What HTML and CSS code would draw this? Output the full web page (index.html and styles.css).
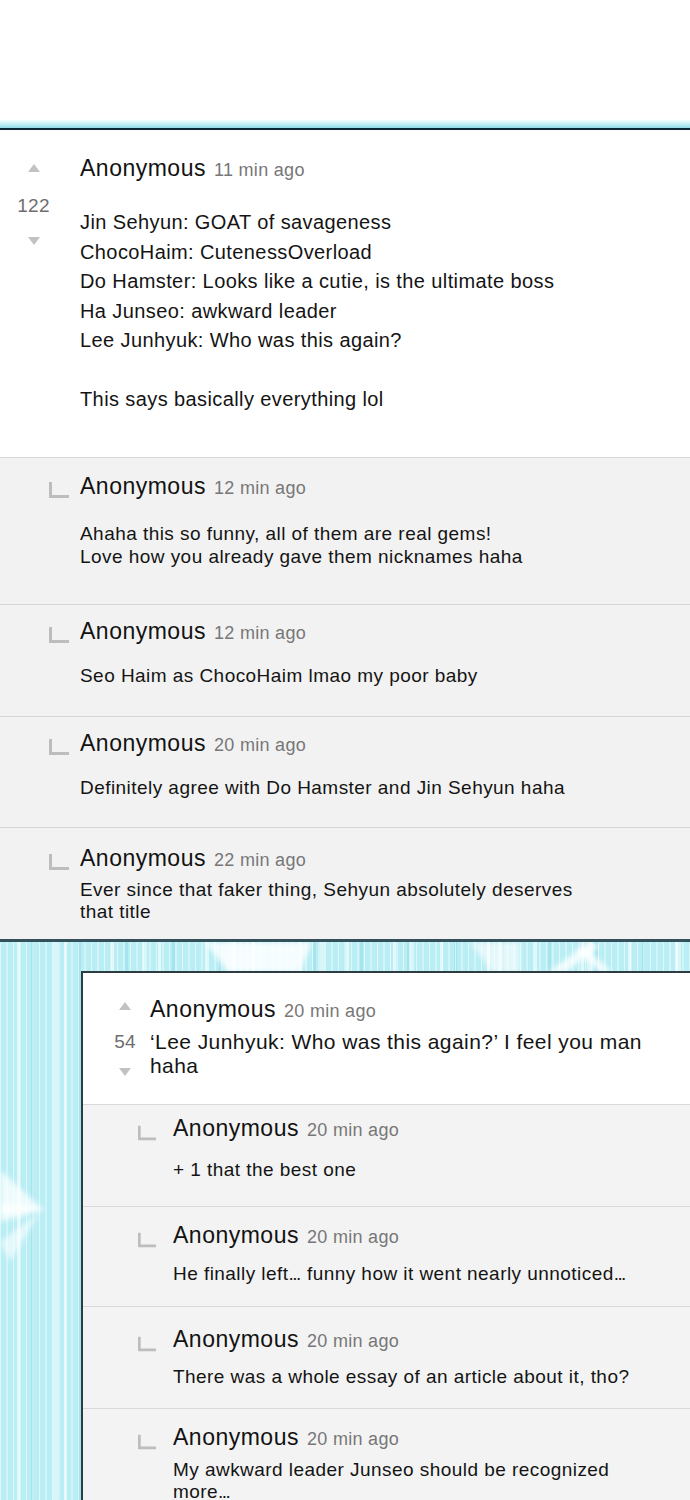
FILE: index.html
```html
<!DOCTYPE html>
<html lang="en">
<head>
<meta charset="utf-8">
<title>Comments</title>
<link rel="stylesheet" href="styles.css">
</head>
<body>
<div class="page">
  <div class="topspace"></div>
  <div class="glow"></div>
  <div class="rule"></div>

  <section class="thread">
    <article class="comment">
      <div class="vote">
        <span class="arrow up"></span>
        <span class="count">122</span>
        <span class="arrow down"></span>
      </div>
      <div class="content">
        <div class="meta"><span class="name">Anonymous</span><span class="time">11 min ago</span></div>
        <p class="body">Jin Sehyun: GOAT of savageness<br>ChocoHaim: CutenessOverload<br>Do Hamster: Looks like a cutie, is the ultimate boss<br>Ha Junseo: awkward leader<br>Lee Junhyuk: Who was this again?<br><br>This says basically everything lol</p>
      </div>
    </article>

    <article class="reply r1">
      <svg class="hook" viewBox="0 0 20 16" aria-hidden="true"><path d="M1.5 0 V14.5 H20"/></svg>
      <div class="content">
        <div class="meta"><span class="name">Anonymous</span><span class="time">12 min ago</span></div>
        <p class="body">Ahaha this so funny, all of them are real gems!<br>Love how you already gave them nicknames haha</p>
      </div>
    </article>

    <article class="reply r2">
      <svg class="hook" viewBox="0 0 20 16" aria-hidden="true"><path d="M1.5 0 V14.5 H20"/></svg>
      <div class="content">
        <div class="meta"><span class="name">Anonymous</span><span class="time">12 min ago</span></div>
        <p class="body">Seo Haim as ChocoHaim lmao my poor baby</p>
      </div>
    </article>

    <article class="reply r3">
      <svg class="hook" viewBox="0 0 20 16" aria-hidden="true"><path d="M1.5 0 V14.5 H20"/></svg>
      <div class="content">
        <div class="meta"><span class="name">Anonymous</span><span class="time">20 min ago</span></div>
        <p class="body">Definitely agree with Do Hamster and Jin Sehyun haha</p>
      </div>
    </article>

    <article class="reply r4">
      <svg class="hook" viewBox="0 0 20 16" aria-hidden="true"><path d="M1.5 0 V14.5 H20"/></svg>
      <div class="content">
        <div class="meta"><span class="name">Anonymous</span><span class="time">22 min ago</span></div>
        <p class="body">Ever since that faker thing, Sehyun absolutely deserves<br>that title</p>
      </div>
    </article>
  </section>

  <div class="rule rule-dark"></div>

  <section class="backdrop">
    <svg class="burst" viewBox="0 0 690 560" preserveAspectRatio="none" aria-hidden="true">
      <defs><filter id="soft"><feGaussianBlur stdDeviation="2.5"/></filter></defs>
      <g fill="#ffffff" filter="url(#soft)">
        <polygon points="205,0 312,0 300,30 228,30" opacity="0.85"/>
        <polygon points="470,0 520,0 520,30 492,30" opacity="0.6"/>
        <polygon points="548,30 590,0 600,4 566,30" opacity="0.8"/>
        <polygon points="600,30 575,8 584,4 612,30" opacity="0.8"/>
        <polygon points="0,228 44,268 0,280" opacity="0.75"/>
        <polygon points="0,262 46,266 0,272" opacity="0.9"/>
        <polygon points="0,300 40,270 10,320" opacity="0.6"/>
      </g>
    </svg>

    <div class="card">
      <article class="comment card-main">
        <div class="vote">
          <span class="arrow up"></span>
          <span class="count">54</span>
          <span class="arrow down"></span>
        </div>
        <div class="content">
          <div class="meta"><span class="name">Anonymous</span><span class="time">20 min ago</span></div>
          <p class="body">‘Lee Junhyuk: Who was this again?’ I feel you man<br>haha</p>
        </div>
      </article>

      <article class="reply card-reply c1">
        <svg class="hook" viewBox="0 0 20 16" aria-hidden="true"><path d="M1.5 0 V14.5 H20"/></svg>
        <div class="content">
          <div class="meta"><span class="name">Anonymous</span><span class="time">20 min ago</span></div>
          <p class="body">+ 1 that the best one</p>
        </div>
      </article>

      <article class="reply card-reply c2">
        <svg class="hook" viewBox="0 0 20 16" aria-hidden="true"><path d="M1.5 0 V14.5 H20"/></svg>
        <div class="content">
          <div class="meta"><span class="name">Anonymous</span><span class="time">20 min ago</span></div>
          <p class="body">He finally left<span class="dots">...</span> funny how it went nearly unnoticed<span class="dots">...</span></p>
        </div>
      </article>

      <article class="reply card-reply c3">
        <svg class="hook" viewBox="0 0 20 16" aria-hidden="true"><path d="M1.5 0 V14.5 H20"/></svg>
        <div class="content">
          <div class="meta"><span class="name">Anonymous</span><span class="time">20 min ago</span></div>
          <p class="body">There was a whole essay of an article about it, tho?</p>
        </div>
      </article>

      <article class="reply card-reply c4">
        <svg class="hook" viewBox="0 0 20 16" aria-hidden="true"><path d="M1.5 0 V14.5 H20"/></svg>
        <div class="content">
          <div class="meta"><span class="name">Anonymous</span><span class="time">20 min ago</span></div>
          <p class="body">My awkward leader Junseo should be recognized<br>more<span class="dots">...</span></p>
        </div>
      </article>
    </div>
  </section>
</div>
</body>
</html>
```

FILE: styles.css
```css
* { box-sizing: border-box; }

html, body {
  margin: 0;
  padding: 0;
  background: #ffffff;
}

body {
  font-family: "Liberation Sans", Arial, Helvetica, sans-serif;
  color: #141414;
}

.page {
  width: 690px;
  height: 1500px;
  overflow: hidden;
  display: flex;
  flex-direction: column;
}

.topspace { height: 119px; background: #ffffff; flex: none; }

.glow {
  height: 9px;
  flex: none;
  background: linear-gradient(to bottom, #ffffff 0%, #d4f6fa 40%, #a9e6ef 80%, #8fdbe8 100%);
}

.rule { height: 2px; flex: none; background: #0c2734; }

.rule-dark { height: 3px; background: #34505a; }

.thread { flex: none; }

/* ---------- shared text ---------- */
.meta {
  display: flex;
  align-items: baseline;
  gap: 8px;
  height: 28px;
  line-height: 28px;
  white-space: nowrap;
}

.name {
  font-size: 23px;
  letter-spacing: 0.5px;
  color: #121212;
}

.time {
  font-size: 18px;
  letter-spacing: 0.3px;
  color: #777777;
}

.body {
  margin: 0;
  font-size: 20px;
  letter-spacing: 0.4px;
  color: #141414;
}

.dots { letter-spacing: -1.6px; margin-right: 1.6px; }

/* ---------- main comment ---------- */
.comment {
  display: flex;
  background: #ffffff;
  border-bottom: 1px solid #d6d6d6;
}

.thread > .comment {
  padding: 24px 0 42px;
}

.vote {
  flex: none;
  width: 67px;
  display: flex;
  flex-direction: column;
  align-items: center;
}

.thread > .comment .vote { margin-right: 13px; }

.arrow {
  width: 0;
  height: 0;
  border-left: 6.5px solid transparent;
  border-right: 6.5px solid transparent;
}

.arrow.up { border-bottom: 8px solid #c2c2c2; margin-top: 10px; }
.arrow.down { border-top: 8px solid #c2c2c2; margin-top: 20px; }

.count {
  margin-top: 23px;
  font-size: 19px;
  line-height: 22px;
  letter-spacing: 0.3px;
  color: #6e6e6e;
}

.thread > .comment .body {
  margin-top: 26px;
  line-height: 29.5px;
}

/* ---------- replies ---------- */
.reply {
  display: flex;
  align-items: flex-start;
  background: #f2f2f2;
  border-bottom: 1px solid #d6d6d6;
  padding-left: 49px;
}

.hook {
  flex: none;
  width: 20px;
  height: 16px;
  margin-top: 9px;
  margin-right: 11px;
  fill: none;
  stroke: #bdbdbd;
  stroke-width: 3;
}

.reply .meta { height: 26px; line-height: 26px; }

.reply .body {
  font-size: 19px;
  letter-spacing: 0.45px;
  line-height: 23px;
}

.r1 { padding-top: 15px; padding-bottom: 36px; }
.r1 .body { margin-top: 23px; }

.r2 { padding-top: 13px; padding-bottom: 28.5px; }
.r2 .body { margin-top: 20.5px; }

.r3 { padding-top: 13px; padding-bottom: 27.5px; }
.r3 .body { margin-top: 20.5px; }

.r4 { padding-top: 17px; padding-bottom: 16px; border-bottom: none; }
.r4 .body { margin-top: 8px; line-height: 22px; }

/* ---------- backdrop ---------- */
.backdrop {
  position: relative;
  flex: 1;
  padding-top: 29px;
  background-color: #b9eef5;
  background-image:
    repeating-linear-gradient(90deg, rgba(255,255,255,0.55) 0 1px, transparent 1px 6px, rgba(255,255,255,0.35) 6px 8px, transparent 8px 13px),
    repeating-linear-gradient(90deg, transparent 0 17px, rgba(255,255,255,0.6) 17px 20px, transparent 20px 31px, rgba(110,205,222,0.28) 31px 34px, transparent 34px 47px),
    repeating-linear-gradient(90deg, transparent 0 53px, rgba(255,255,255,0.45) 53px 58px, transparent 58px 89px);
}

.burst {
  position: absolute;
  left: 0;
  top: 0;
  width: 690px;
  height: 560px;
}

.card {
  position: relative;
  margin-left: 81px;
  border-top: 2px solid #2e3b40;
  border-left: 2px solid #2e3b40;
  background: #f3f3f3;
}

.card-main {
  padding: 22px 0 26px;
  border-bottom: 1px solid #d8d8d8;
}

.card-main .vote {
  width: 67px;
  padding-left: 17px;
}

.card-main .arrow.up { margin-top: 7px; }
.card-main .count { margin-top: 21px; }
.card-main .arrow.down { margin-top: 15px; }

.card-main .body {
  margin-top: 7px;
  font-size: 21px;
  letter-spacing: 0.43px;
  line-height: 24px;
}

.card-reply {
  background: #f3f3f3;
  padding-left: 55px;
  border-bottom-color: #d8d8d8;
}

.card-reply .hook {
  width: 18px;
  height: 16px;
  margin-top: 10px;
  margin-right: 17px;
}

.c1 { padding-top: 10px; padding-bottom: 24.5px; }
.c1 .body { margin-top: 17.5px; }

.c2 { padding-top: 15px; padding-bottom: 20.5px; }
.c2 .body { margin-top: 14.5px; }

.c3 { padding-top: 19px; padding-bottom: 19.5px; }
.c3 .body { margin-top: 13.5px; }

.c4 { padding-top: 15px; padding-bottom: 20px; border-bottom: none; }
.c4 .body { margin-top: 9px; line-height: 22px; }
```
